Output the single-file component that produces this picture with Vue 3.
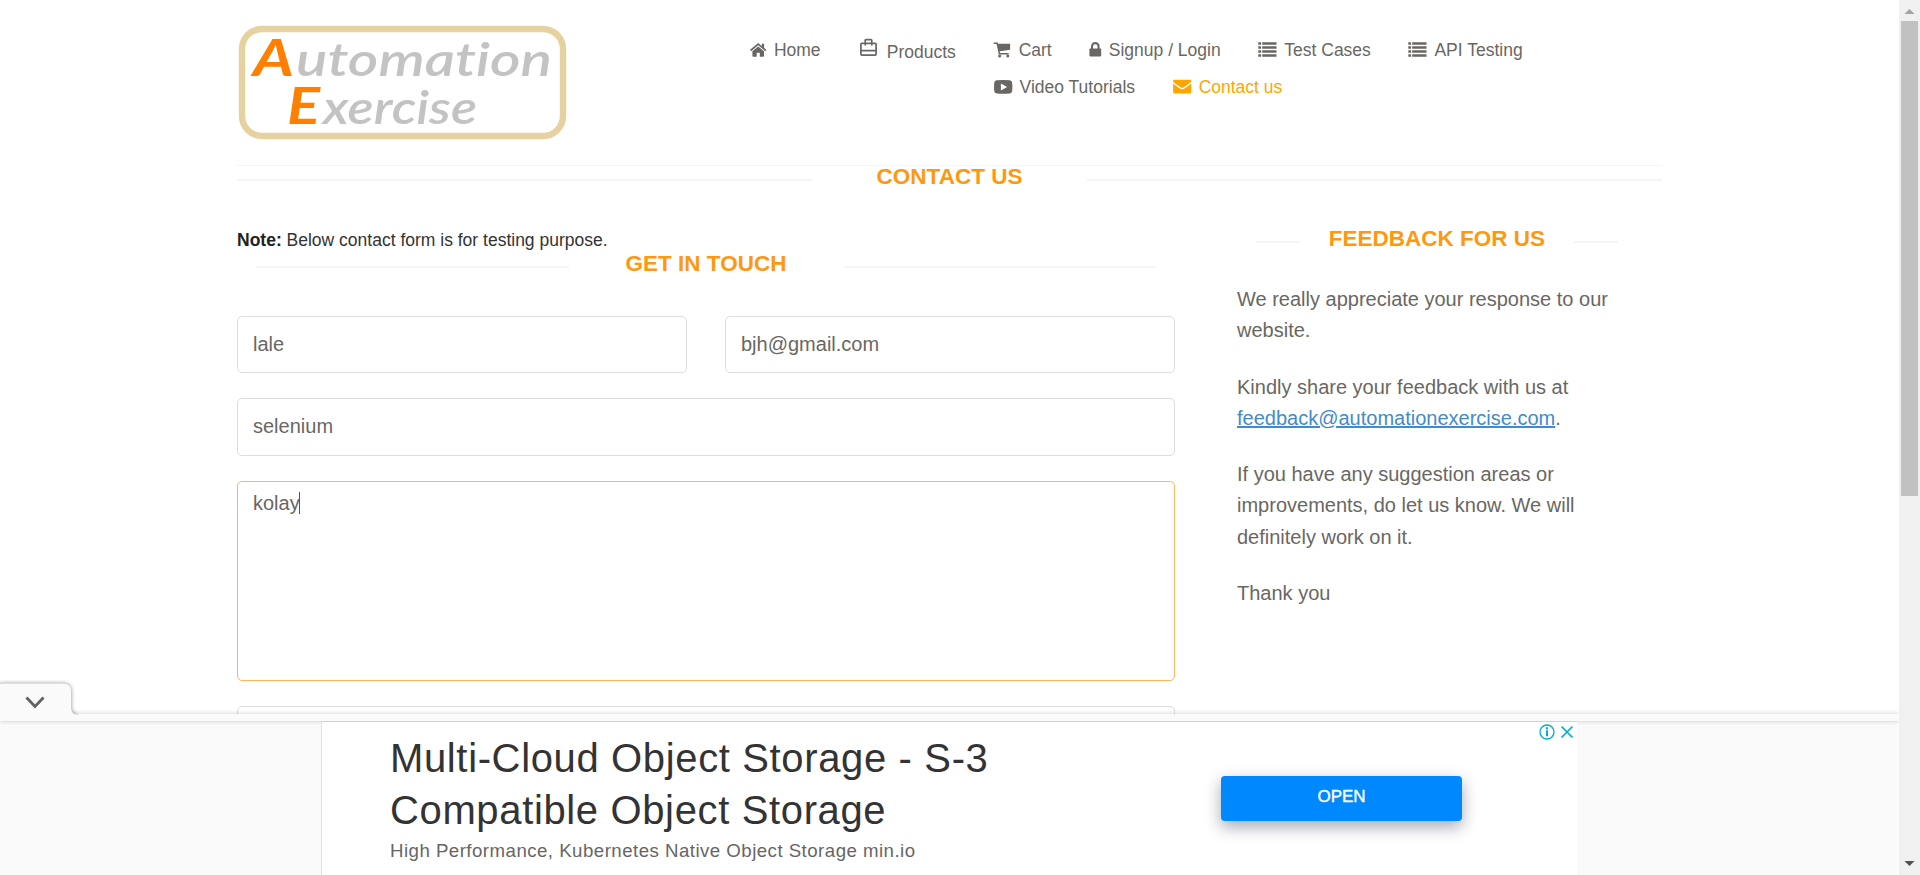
<script setup>
const firstRow = [
  { label: 'Home', icon: 'home', slot: 's24' },
  { label: 'Products', icon: 'bag', slot: 's28' },
  { label: 'Cart', icon: 'cart', slot: 's25' },
  { label: 'Signup / Login', icon: 'lock', slot: 's20' },
  { label: 'Test Cases', icon: 'list', slot: 's26' },
  { label: 'API Testing', icon: 'list', slot: 's26' },
]
const secondRow = [
  { label: 'Video Tutorials', icon: 'video', slot: 's26' },
  { label: 'Contact us', icon: 'mail', slot: 's26', active: true },
]
const navRows = [firstRow, secondRow]
</script>

<template>
  <div class="window">
    <div class="page">
      <main class="content">
        <header class="header">
          <svg class="logo" width="330" height="116" viewBox="0 0 330 116">
            <rect x="5" y="4" width="321" height="107" rx="20" fill="none" stroke="#e6d2a0" stroke-width="6.4" />
            <g class="logo-text">
              <text x="16" y="51" font-size="51" fill="#ff8000" font-weight="700" textLength="41" lengthAdjust="spacingAndGlyphs">A</text>
              <text x="59" y="51" font-size="47" fill="#c3c3c3" textLength="256" lengthAdjust="spacingAndGlyphs">utomation</text>
              <text x="50" y="99" font-size="51" fill="#ff8000" font-weight="700" textLength="33" lengthAdjust="spacingAndGlyphs">E</text>
              <text x="86" y="99" font-size="47" fill="#c3c3c3" textLength="154" lengthAdjust="spacingAndGlyphs">xercise</text>
            </g>
          </svg>
          <nav class="nav">
            <div v-for="(row, r) in navRows" :key="r" class="nav-row" :class="'row' + r">
              <a v-for="item in row" :key="item.label" class="nav-item" :class="[item.icon, { active: item.active }]">
                <span class="slot" :class="item.slot">
                  <svg v-if="item.icon === 'home'" width="17" height="14" viewBox="0 0 17 14">
                    <path d="M8.200 3.500 14 8.300V13a.7.7 0 0 1-.7.7H9.800V9.800H6.700v3.900H3.100a.7.7 0 0 1-.7-.7V8.300z" />
                    <path d="M.6 7.500 8.200 1.200l7.600 6.300" fill="none" stroke="currentColor" stroke-width="1.700" />
                    <path d="M11.800 .8h2.300v5.200l-2.300-1.900z" />
                  </svg>
                  <svg v-else-if="item.icon === 'bag'" width="20" height="20" viewBox="0 0 20 20">
                    <path d="M3.8 5.300h13.400q.9 0 .9.9v10q0 .9-.9.9H3.800q-.9 0-.9-.9v-10q0-.9.9-.9zM3 12.700h15M7.200 7.600V2.600q0-.9.9-.9h4.800q.9 0 .9.9v5" fill="none" stroke="currentColor" stroke-width="1.700" />
                  </svg>
                  <svg v-else-if="item.icon === 'cart'" width="19" height="16" viewBox="0 0 19 16">
                    <path d="M.7 1.200h3.500l2.200 10.500h9.200" fill="none" stroke="currentColor" stroke-width="1.500" />
                    <path d="M4 1.800h13.100v6L5.600 9.500z" /><circle cx="6.600" cy="14" r="1.500" /><circle cx="14.800" cy="14" r="1.500" />
                  </svg>
                  <svg v-else-if="item.icon === 'lock'" width="13" height="15" viewBox="0 0 13 15">
                    <path d="M3 7V4.400a3.300 3.300 0 0 1 6.600 0V7" fill="none" stroke="currentColor" stroke-width="2.100" />
                    <rect x=".4" y="6.400" width="11.800" height="8" rx=".8" />
                  </svg>
                  <svg v-else-if="item.icon === 'list'" width="19" height="15" viewBox="0 0 19 15">
                    <path d="M.3.3h2.800v2.400H.3zM.3 4.300h2.800v2.400H.3zM.3 8.300h2.800v2.400H.3zM.3 12.300h2.800v2.400H.3zM4.200.3h14.300v2.400H4.200zM4.200 4.300h14.300v2.400H4.200zM4.200 8.300h14.300v2.400H4.200zM4.200 12.300h14.300v2.400H4.200z" />
                  </svg>
                  <svg v-else-if="item.icon === 'video'" width="19" height="14" viewBox="0 0 19 14">
                    <path fill-rule="evenodd" d="M2.700.2Q9.200-.2 15.700.2 18 .4 18.200 3q.3 4 0 8-.2 2.400-2.500 2.600-6.500.5-13 0Q.5 13.400.2 11q-.3-4 0-8Q.5.4 2.700.2zM6.900 3.400v7.200l6.200-3.600z" />
                  </svg>
                  <svg v-else width="19" height="15" viewBox="0 0 19 15">
                    <path d="M1.300.8h15.800q1.200 0 1.200 1.200v.5Q16.700 4.600 10.500 8.400q-1.300.8-2.600 0Q1.700 4.600.1 2.500V2Q.1.8 1.300.8z" />
                    <path d="M.1 4.500q2 2 7.300 5.200 1.800 1 3.600 0 5.300-3.200 7.300-5.200v8.600q0 1.300-1.200 1.300H1.300Q.1 14.400.1 13.100z" />
                  </svg>
                </span>
                <span>{{ item.label }}</span>
              </a>
            </div>
          </nav>
        </header>

        <h2 class="title title-page"><i></i><span>CONTACT US</span><i></i></h2>

        <div class="columns">
          <section class="form">
            <p class="note"><b>Note:</b> Below contact form is for testing purpose.</p>
            <h2 class="title title-form"><i></i><span>GET IN TOUCH</span><i></i></h2>
            <div class="pair">
              <input class="field" type="text" value="lale" />
              <input class="field" type="text" value="bjh@gmail.com" />
            </div>
            <input class="field subject" type="text" value="selenium" />
            <div class="field message"><span>kolay</span><span class="caret"></span></div>
            <div class="field upload"></div>
          </section>
          <aside class="info">
            <h2 class="title title-info"><i></i><span>FEEDBACK FOR US</span><i></i></h2>
            <p>We really appreciate your response to our website.</p>
            <p>Kindly share your feedback with us at <a class="link">feedback@automationexercise.com</a>.</p>
            <p>If you have any suggestion areas or improvements, do let us know. We will definitely work on it.</p>
            <p>Thank you</p>
          </aside>
        </div>
      </main>

      <section class="anchor">
        <svg class="tab" width="82" height="40" viewBox="0 0 82 40">
          <path class="tab-shape" d="M-4 8.500Q-2 3.500 4 3.500H63Q71 3.500 71 11V27Q71 33.500 76 34.500V41H-4z" />
          <path d="M26.500 17.500 35 26.500l8.500-9" fill="none" stroke="#616161" stroke-width="2.800" />
        </svg>
        <div class="strip"></div>
        <div class="ad-body">
          <div class="ad">
            <div class="ad-text">
              <div class="ad-title">Multi-Cloud Object Storage - S-3<br />Compatible Object Storage</div>
              <div class="ad-sub">High Performance, Kubernetes Native Object Storage min.io</div>
            </div>
            <button class="open">OPEN</button>
            <svg class="choices" width="36" height="18" viewBox="0 0 36 18">
              <circle cx="9" cy="9" r="7" fill="none" stroke="#00aecd" stroke-width="1.300" />
              <path d="M8 4.200h2v2H8zM8 7.200h2v6H8z" fill="#00aecd" />
              <path d="m23.500 3.500 11 11m0-11-11 11" fill="none" stroke="#00aecd" stroke-width="1.700" />
            </svg>
          </div>
        </div>
      </section>
    </div>

    <div class="scrollbar">
      <svg width="21" height="21" viewBox="0 0 21 21"><path d="M10.500 9 15.500 14h-10z" fill="#a3a3a3" /></svg>
      <div class="thumb"></div>
      <svg class="down" width="21" height="21" viewBox="0 0 21 21"><path d="M5.500 7h10l-5 5z" fill="#505050" /></svg>
    </div>
  </div>
</template>

<style>
body { margin: 0; overflow: hidden; }
</style>

<style scoped>
.window {
  display: flex;
  width: 1920px;
  height: 875px;
  overflow: hidden;
  background: #fff;
  font-family: "Liberation Sans", Arial, sans-serif;
  color: #696763;
}
.window * { box-sizing: border-box; }
.page { display: flex; flex-direction: column; width: 1899px; height: 875px; }
.content { height: 714px; padding: 0 237px; overflow: hidden; }
.header {
  display: flex;
  height: 166px;
  border-bottom: 1px solid #f5f5f5;
}
.logo { margin: 25px 0 0; flex: none; }
.logo-text {
  font-family: Lato, "Open Sans", sans-serif;
  font-style: italic;
  font-weight: 600;
  font-variant-ligatures: none;
}
.nav { margin: 40px 0 0 183px; font-size: 17.5px; line-height: 20px; white-space: nowrap; }
.nav-row { display: flex; gap: 37.5px; height: 37px; }
.row1 { margin-left: 243.500px; }
.nav-item { display: flex; height: 20px; }
.nav-item.bag span:last-child { padding-top: 2px; }
.active { color: #ffa500; }
.slot { flex: none; padding-top: 2px; }
.slot svg { display: block; fill: currentColor; }
.home .slot { padding-top: 3px; }
.bag .slot { padding-top: 0; margin-top: -2px; }
.video .slot { padding-top: 3px; }
.s20 { width: 19.600px; }
.s24 { width: 23.900px; }
.s25 { width: 25.300px; }
.s26 { width: 26.100px; }
.s28 { width: 28.700px; }

.title {
  display: flex;
  justify-content: space-between;
  height: 23px;
  margin: 0;
  font-size: 22.500px;
  line-height: 21px;
  font-weight: 700;
  color: #fe980f;
  white-space: nowrap;
}
.title i { height: 2px; margin-top: 13px; background: #f5f5f5; }
.title-page i { width: 575px; }
.title-form { margin: 3px 19px 40px; }
.title-form i { width: 312.500px; }
.title-info { margin: 0 19px 33px; width: 362px; }
.title-info i { width: 44px; }

.columns { display: flex; gap: 62px; }
.form { width: 938px; padding-top: 41px; }
.note { margin: 0; font-size: 17.500px; line-height: 20px; color: #333; }
.note b { color: #222; }
.pair { display: flex; gap: 38px; }
.pair .field { flex: 1; min-width: 0; }
.field {
  display: block;
  width: 100%;
  height: 57px;
  margin: 0 0 25px;
  padding: 0 15px;
  border: 1px solid #ddd;
  border-radius: 5px;
  background: #fff;
  font: 20px/22px "Liberation Sans", Arial, sans-serif;
  color: #696763;
}
.subject { height: 58px; padding-bottom: 1px; }
.message { display: flex; height: 200px; padding-top: 10px; border-color: #fdb45e; }
.caret { width: 1px; height: 22px; margin-left: -1px; background: #555; }
.info { width: 400px; padding-top: 39px; }
.info p { margin: 0 0 25px; font-size: 20px; line-height: 31.250px; }
.link { color: #428bca; text-decoration: underline; }

.anchor { position: relative; height: 161px; background: #fafafa; }
.tab { position: absolute; left: 0; top: -34px; z-index: 2; clip-path: inset(0 0 5px 0); }
.tab-shape { fill: #fafafa; filter: drop-shadow(0 0 2px rgba(0, 0, 0, 0.45)); }
.strip {
  position: relative;
  height: 7px;
  background: #fafafa;
  box-shadow: 0 0 5px rgba(0, 0, 0, 0.2);
  clip-path: inset(-7px 0 -4px 0);
}
.ad-body { display: flex; height: 154px; padding-left: 321px; }
.ad {
  position: relative;
  display: flex;
  width: 1256px;
  border-top: 1px solid #d2d2d2;
  border-left: 1px solid #e1e1e1;
  background: #fff;
}
.ad-text { width: 830px; padding: 10px 0 0 68px; white-space: nowrap; }
.ad-title { font-size: 40px; line-height: 52px; letter-spacing: 0.640px; color: #333; }
.ad-sub { margin-top: 4px; font-size: 18.670px; line-height: 22px; letter-spacing: 0.470px; color: #666; }
.open {
  flex: none;
  width: 241px;
  height: 45px;
  margin: 54px 0 0 69px;
  padding: 0 0 4px;
  border: 0;
  border-radius: 4px;
  background: #0088ff;
  box-shadow: 0 6px 16px rgba(20, 30, 60, 0.38);
  font: 500 17px/20px "Liberation Sans", Arial, sans-serif;
  -webkit-text-stroke: 0.400px #fff;
  color: #fff;
}
.choices { position: absolute; top: 1px; right: 3px; }

.scrollbar { display: flex; flex-direction: column; width: 21px; background: #f0f0f0; }
.scrollbar svg { flex: none; }
.thumb { width: 17px; height: 475px; margin: 0 2px; background: #c1c1c1; }
.down { margin-top: auto; }
</style>
